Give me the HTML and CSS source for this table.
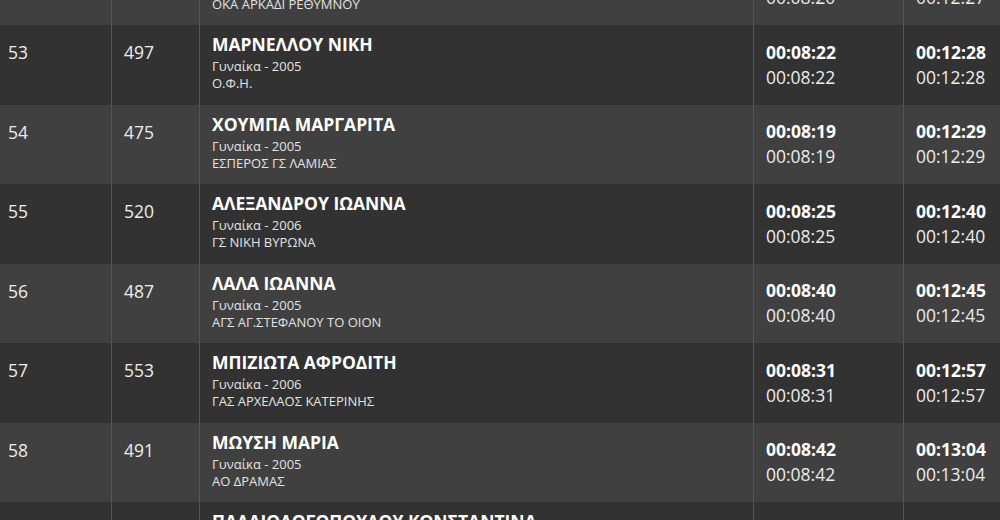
FILE: index.html
```html
<!DOCTYPE html>
<html lang="el">
<head>
<meta charset="utf-8">
<title>Αποτελέσματα</title>
<link rel="stylesheet" href="styles.css">
</head>
<body>
<div class="results">
  <div class="row light">
    <div class="cell pos">52</div>
    <div class="cell bib">512</div>
    <div class="cell athlete">
      <div class="name">ΠΑΠΑΔΑΚΗ ΕΛΕΝΗ</div>
      <div class="meta">Γυναίκα - 2005</div>
      <div class="meta">ΟΚΑ ΑΡΚΑΔΙ ΡΕΘΥΜΝΟΥ</div>
    </div>
    <div class="cell time"><div class="t1">00:08:20</div><div class="t2">00:08:20</div></div>
    <div class="cell time last"><div class="t1">00:12:27</div><div class="t2">00:12:27</div></div>
  </div>
  <div class="row dark">
    <div class="cell pos">53</div>
    <div class="cell bib">497</div>
    <div class="cell athlete">
      <div class="name">ΜΑΡΝΕΛΛΟΥ ΝΙΚΗ</div>
      <div class="meta">Γυναίκα - 2005</div>
      <div class="meta">Ο.Φ.Η.</div>
    </div>
    <div class="cell time"><div class="t1">00:08:22</div><div class="t2">00:08:22</div></div>
    <div class="cell time last"><div class="t1">00:12:28</div><div class="t2">00:12:28</div></div>
  </div>
  <div class="row light">
    <div class="cell pos">54</div>
    <div class="cell bib">475</div>
    <div class="cell athlete">
      <div class="name">ΧΟΥΜΠΑ ΜΑΡΓΑΡΙΤΑ</div>
      <div class="meta">Γυναίκα - 2005</div>
      <div class="meta">ΕΣΠΕΡΟΣ ΓΣ ΛΑΜΙΑΣ</div>
    </div>
    <div class="cell time"><div class="t1">00:08:19</div><div class="t2">00:08:19</div></div>
    <div class="cell time last"><div class="t1">00:12:29</div><div class="t2">00:12:29</div></div>
  </div>
  <div class="row dark">
    <div class="cell pos">55</div>
    <div class="cell bib">520</div>
    <div class="cell athlete">
      <div class="name">ΑΛΕΞΑΝΔΡΟΥ ΙΩΑΝΝΑ</div>
      <div class="meta">Γυναίκα - 2006</div>
      <div class="meta">ΓΣ ΝΙΚΗ ΒΥΡΩΝΑ</div>
    </div>
    <div class="cell time"><div class="t1">00:08:25</div><div class="t2">00:08:25</div></div>
    <div class="cell time last"><div class="t1">00:12:40</div><div class="t2">00:12:40</div></div>
  </div>
  <div class="row light">
    <div class="cell pos">56</div>
    <div class="cell bib">487</div>
    <div class="cell athlete">
      <div class="name">ΛΑΛΑ ΙΩΑΝΝΑ</div>
      <div class="meta">Γυναίκα - 2005</div>
      <div class="meta">ΑΓΣ ΑΓ.ΣΤΕΦΑΝΟΥ ΤΟ ΟΙΟΝ</div>
    </div>
    <div class="cell time"><div class="t1">00:08:40</div><div class="t2">00:08:40</div></div>
    <div class="cell time last"><div class="t1">00:12:45</div><div class="t2">00:12:45</div></div>
  </div>
  <div class="row dark">
    <div class="cell pos">57</div>
    <div class="cell bib">553</div>
    <div class="cell athlete">
      <div class="name">ΜΠΙΖΙΩΤΑ ΑΦΡΟΔΙΤΗ</div>
      <div class="meta">Γυναίκα - 2006</div>
      <div class="meta">ΓΑΣ ΑΡΧΕΛΑΟΣ ΚΑΤΕΡΙΝΗΣ</div>
    </div>
    <div class="cell time"><div class="t1">00:08:31</div><div class="t2">00:08:31</div></div>
    <div class="cell time last"><div class="t1">00:12:57</div><div class="t2">00:12:57</div></div>
  </div>
  <div class="row light">
    <div class="cell pos">58</div>
    <div class="cell bib">491</div>
    <div class="cell athlete">
      <div class="name">ΜΩΥΣΗ ΜΑΡΙΑ</div>
      <div class="meta">Γυναίκα - 2005</div>
      <div class="meta">ΑΟ ΔΡΑΜΑΣ</div>
    </div>
    <div class="cell time"><div class="t1">00:08:42</div><div class="t2">00:08:42</div></div>
    <div class="cell time last"><div class="t1">00:13:04</div><div class="t2">00:13:04</div></div>
  </div>
  <div class="row dark">
    <div class="cell pos">59</div>
    <div class="cell bib">530</div>
    <div class="cell athlete">
      <div class="name">ΠΑΛΑΙΟΛΟΓΟΠΟΥΛΟΥ ΚΩΝΣΤΑΝΤΙΝΑ</div>
      <div class="meta">Γυναίκα - 2006</div>
      <div class="meta">ΓΣ ΠΕΡΙΣΤΕΡΙΟΥ</div>
    </div>
    <div class="cell time"><div class="t1">00:08:45</div><div class="t2">00:08:45</div></div>
    <div class="cell time last"><div class="t1">00:13:10</div><div class="t2">00:13:10</div></div>
  </div>
</div>
</body>
</html>
```

FILE: styles.css
```css
html, body {
  margin: 0;
  padding: 0;
  background: #333333;
  overflow: hidden;
}

body {
  width: 1000px;
  height: 520px;
  font-family: "Open Sans", "Liberation Sans", sans-serif;
  color: #f0f0f0;
}

.results {
  margin-top: -54.5px;
}

.row {
  display: grid;
  grid-template-columns: 112px 88px 554px 150px 96px;
  height: 79.5px;
}

.row.dark { background: #323232; }
.row.light { background: #404040; }

.cell {
  box-sizing: border-box;
  border-right: 1px solid #555555;
  padding: 7px 12px 0;
}

.cell.last { border-right: none; }

.pos, .bib {
  font-size: 17.5px;
  line-height: 22px;
  padding-top: 16px;
  color: #ededed;
}

.pos { padding-left: 8px; }

.name {
  font-weight: 700;
  font-size: 17.5px;
  line-height: 24px;
  margin-bottom: 2px;
  color: #ffffff;
}

.meta {
  font-size: 13px;
  line-height: 17px;
  color: #e2e2e2;
}

.time {
  padding-top: 14.5px;
  font-size: 17.5px;
  line-height: 25px;
}

.t1 { font-weight: 700; color: #ffffff; }
.t2 { color: #ececec; }
```
